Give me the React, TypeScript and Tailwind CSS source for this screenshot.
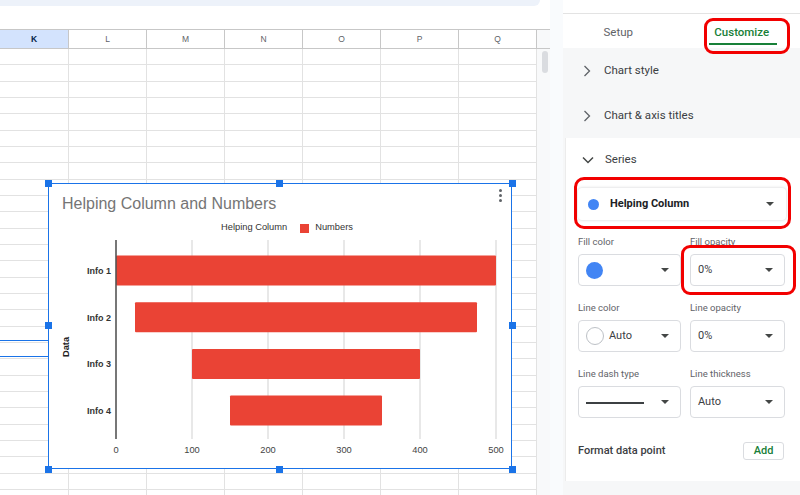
import React from 'react'

const COLS = [
  { label: 'K', w: 69, active: true },
  { label: 'L', w: 78 },
  { label: 'M', w: 78 },
  { label: 'N', w: 78 },
  { label: 'O', w: 78 },
  { label: 'P', w: 78 },
  { label: 'Q', w: 78 },
]

const ROWS = Array.from({ length: 28 }, (_, i) => i)

const BARS = [
  { label: 'Info 1', from: 0, to: 500 },
  { label: 'Info 2', from: 25, to: 475 },
  { label: 'Info 3', from: 100, to: 400 },
  { label: 'Info 4', from: 150, to: 350 },
]

const arial = { fontFamily: '"Liberation Sans", Arial, sans-serif' }
const roboto = { fontFamily: 'Roboto, "Liberation Sans", Arial, sans-serif' }

function Caret() {
  return (
    <svg width="8" height="4" viewBox="0 0 8 4" className="shrink-0">
      <path d="M0 0h8L4 4z" fill="#444746" />
    </svg>
  )
}

function Chevron({ down }: { down?: boolean }) {
  return down ? (
    <svg width="12" height="8" viewBox="0 0 12 8">
      <path d="M1 1.5l5 5 5-5" fill="none" stroke="#444746" strokeWidth="1.5" />
    </svg>
  ) : (
    <svg width="8" height="12" viewBox="0 0 8 12">
      <path d="M1.5 1l5 5-5 5" fill="none" stroke="#5f6368" strokeWidth="1.3" />
    </svg>
  )
}

function Handle({ className }: { className: string }) {
  return <span className={`absolute w-[7px] h-[7px] bg-[#1a73e8] ${className}`} />
}

function Chart() {
  const sx = (v: number) => 67 + v * 0.76
  return (
    <div className="absolute left-[48px] top-[183px] w-[464px] h-[286px] border-[1.5px] border-[#1a73e8] bg-white" style={arial}>
      <Handle className="-left-[4.5px] -top-[4.5px]" />
      <Handle className="left-[227px] -top-[4.5px]" />
      <Handle className="-right-[4.5px] -top-[4.5px]" />
      <Handle className="-left-[4.5px] top-[138px]" />
      <Handle className="-right-[4.5px] top-[138px]" />
      <Handle className="-left-[4.5px] -bottom-[4.5px]" />
      <Handle className="left-[227px] -bottom-[4.5px]" />
      <Handle className="-right-[4.5px] -bottom-[4.5px]" />

      {/* kebab menu */}
      <div className="absolute right-[9px] top-[5px] flex flex-col gap-[2px]">
        <span className="w-[3px] h-[3px] rounded-full bg-[#5f6368]" />
        <span className="w-[3px] h-[3px] rounded-full bg-[#5f6368]" />
        <span className="w-[3px] h-[3px] rounded-full bg-[#5f6368]" />
      </div>

      <p className="pl-[13px] pt-[10px] text-[16px] leading-[19px] text-[#757575]">Helping Column and Numbers</p>
      <div className="flex items-center justify-center gap-[4px] mt-[8px] h-[14px] text-[9.3px] text-[#333] pl-[14px]">
        <span>Helping Column</span>
        <span className="w-[9px] h-[9px] bg-[#ea4335] ml-[9px] mr-[2px]" />
        <span>Numbers</span>
      </div>

      <svg width="461" height="231" className="block">
        {[100, 200, 300, 400, 500].map(v => (
          <line key={v} x1={sx(v)} x2={sx(v)} y1="5" y2="204" stroke="#e6e6e6" strokeWidth="1.8" />
        ))}
        {BARS.map((b, i) => (
          <g key={b.label}>
            <rect x={sx(b.from)} y={20.5 + i * 46.7} width={(b.to - b.from) * 0.76} height="30" rx="1" fill="#ea4335" />
            <text x="62" y={39 + i * 46.7} textAnchor="end" fontSize="9" fontWeight="bold" fill="#333">{b.label}</text>
          </g>
        ))}
        <line x1="67" x2="67" y1="5" y2="204" stroke="#555" strokeWidth="1.6" />
        {[0, 100, 200, 300, 400, 500].map(v => (
          <text key={v} x={sx(v)} y="218" textAnchor="middle" fontSize="9.3" fill="#444">{v}</text>
        ))}
        <text x="20" y="112" textAnchor="middle" fontSize="9.3" fontWeight="bold" fill="#222" transform="rotate(-90 20 112)">Data</text>
      </svg>
    </div>
  )
}

function Sheet() {
  return (
    <div className="relative w-[550px] h-full flex flex-col bg-white" style={arial}>
      <div className="h-[6px] w-[540px] bg-[#edf2fa] rounded-br-[8px]" />
      <div className="h-[23px]" />
      {/* column headers */}
      <div className="flex h-[20px] border-y border-[#c7c7c7]">
        {COLS.map(c => (
          <div
            key={c.label}
            style={{ width: c.w }}
            className={`shrink-0 border-r border-[#c7c7c7] flex items-center justify-center text-[8.5px] ${c.active ? 'bg-[#d3e3fd] text-[#041e49] font-bold' : 'bg-white text-[#5f6368]'}`}
          >
            {c.label}
          </div>
        ))}
        <div className="flex-1 bg-[#f8f9fa]" />
      </div>
      {/* grid body */}
      <div className="flex-1 flex overflow-hidden">
        <div className="flex flex-col">
          {ROWS.map(r => (
            <div key={r} className="flex h-[16.33px] shrink-0 border-b border-[#e2e2e2]">
              {COLS.map(c => (
                <div key={c.label} style={{ width: c.w }} className="shrink-0 border-r border-[#e2e2e2]" />
              ))}
            </div>
          ))}
        </div>
        <div className="flex-1 bg-[#f8f9fa] pt-[2px] pl-[5px]">
          <div className="w-[6px] h-[22px] rounded-full bg-[#dadce0]" />
        </div>
      </div>

      {/* selected range lines */}
      <div className="absolute left-0 top-[340px] w-[69px] h-[17px] border-y-[1.5px] border-[#1a73e8]" />

      <Chart />
    </div>
  )
}

function Select({ children, w }: { children: React.ReactNode; w: string }) {
  return (
    <div className={`${w} h-[32px] flex items-center justify-between pl-[7px] pr-[11px] border border-[#dadce0] rounded-[4px] bg-white`}>
      <div className="flex items-center gap-[5px] text-[11px] text-[#3c4043]">{children}</div>
      <Caret />
    </div>
  )
}

function Field({ label, children }: { label: string; children: React.ReactNode }) {
  return (
    <div className="flex flex-col gap-[6px]">
      <span className="h-[12px] leading-[12px] text-[9.5px] text-[#5f6368]">{label}</span>
      {children}
    </div>
  )
}

function Sidebar() {
  return (
    <div className="w-[237px] h-full flex flex-col bg-[#f6f7f8]" style={roboto}>
      <div className="h-[14px] bg-white border-b border-[#e3e3e3]" />
      {/* tabs */}
      <div className="h-[34px] flex bg-white">
        <div className="flex-1 flex items-center justify-center pt-[3px] text-[11.5px] text-[#5f6368]">
          <span className="-ml-[8px]">Setup</span>
        </div>
        <div className="relative flex-1 flex items-center justify-center pt-[3px]">
          <span className="text-[11.5px] font-medium text-[#188038] ml-[2px]">Customize</span>
          <span className="absolute left-[27px] bottom-[3px] w-[68px] h-[2px] bg-[#188038]" />
          <span className="absolute left-[22px] top-[4px] w-[86px] h-[36px] border-[3px] border-[#f20000] rounded-[9px]" />
        </div>
      </div>

      <div className="h-[45px] flex items-center gap-[13px] pl-[20px] text-[11.5px] text-[#3c4043]">
        <Chevron />
        <span>Chart style</span>
      </div>
      <div className="h-[45px] flex items-center gap-[13px] pl-[20px] text-[11.5px] text-[#3c4043]">
        <Chevron />
        <span>Chart &amp; axis titles</span>
      </div>

      {/* Series card */}
      <div className="ml-[2px] bg-white border-l border-[#ececec] pb-[21px]">
        <div className="h-[39px] pt-[5px] flex items-center gap-[11px] pl-[16px] text-[11.5px] text-[#3c4043]">
          <Chevron down />
          <span>Series</span>
        </div>
        <div className="ml-[8px] w-[217px] h-[52px] border-[3px] border-[#f20000] rounded-[10px] pl-[1px] pt-[8px]">
          <div className="w-[208px] h-[32px] flex items-center justify-between pl-[10px] pr-[12px] rounded-[4px] bg-white shadow-[0_0_3px_rgba(60,64,67,0.25)]">
            <div className="flex items-center gap-[11px] pt-[1px]">
              <span className="w-[11px] h-[11px] rounded-full bg-[#4285f4]" />
              <span className="text-[11px] font-bold text-[#202124]">Helping Column</span>
            </div>
            <Caret />
          </div>
        </div>

        <div className="grid grid-cols-[103px_95px] gap-x-[9px] gap-y-[16px] pl-[12px] mt-[7px]">
          <Field label="Fill color">
            <Select w="w-[103px]">
              <span className="w-[17px] h-[17px] rounded-full bg-[#4285f4]" />
            </Select>
          </Field>
          <div className="relative">
            <Field label="Fill opacity">
              <Select w="w-[95px]">0%</Select>
            </Field>
            <span className="absolute -left-[9px] top-[9px] w-[115px] h-[50px] border-[3px] border-[#f20000] rounded-[9px]" />
          </div>
          <Field label="Line color">
            <Select w="w-[103px]">
              <span className="w-[18px] h-[18px] rounded-full border border-[#bdc1c6]" />
              <span>Auto</span>
            </Select>
          </Field>
          <Field label="Line opacity">
            <Select w="w-[95px]">0%</Select>
          </Field>
          <Field label="Line dash type">
            <Select w="w-[103px]">
              <span className="w-[58px] h-[1.5px] bg-[#3c4043] mt-[2px]" />
            </Select>
          </Field>
          <Field label="Line thickness">
            <Select w="w-[95px]">Auto</Select>
          </Field>
        </div>

        <div className="flex items-center justify-between pl-[12px] pr-[16px] mt-[24px] h-[18px]">
          <span className="text-[11px] font-medium text-[#3c4043]">Format data point</span>
          <span className="w-[41px] h-[18px] flex items-center justify-center border border-[#dadce0] rounded-[3px] text-[11px] font-medium text-[#188038]">Add</span>
        </div>
      </div>
    </div>
  )
}

export default function App() {
  return (
    <div className="w-[800px] h-[495px] flex overflow-hidden bg-white">
      <Sheet />
      <div className="w-[13px] h-full bg-[#f9fbfd]" />
      <Sidebar />
    </div>
  )
}
